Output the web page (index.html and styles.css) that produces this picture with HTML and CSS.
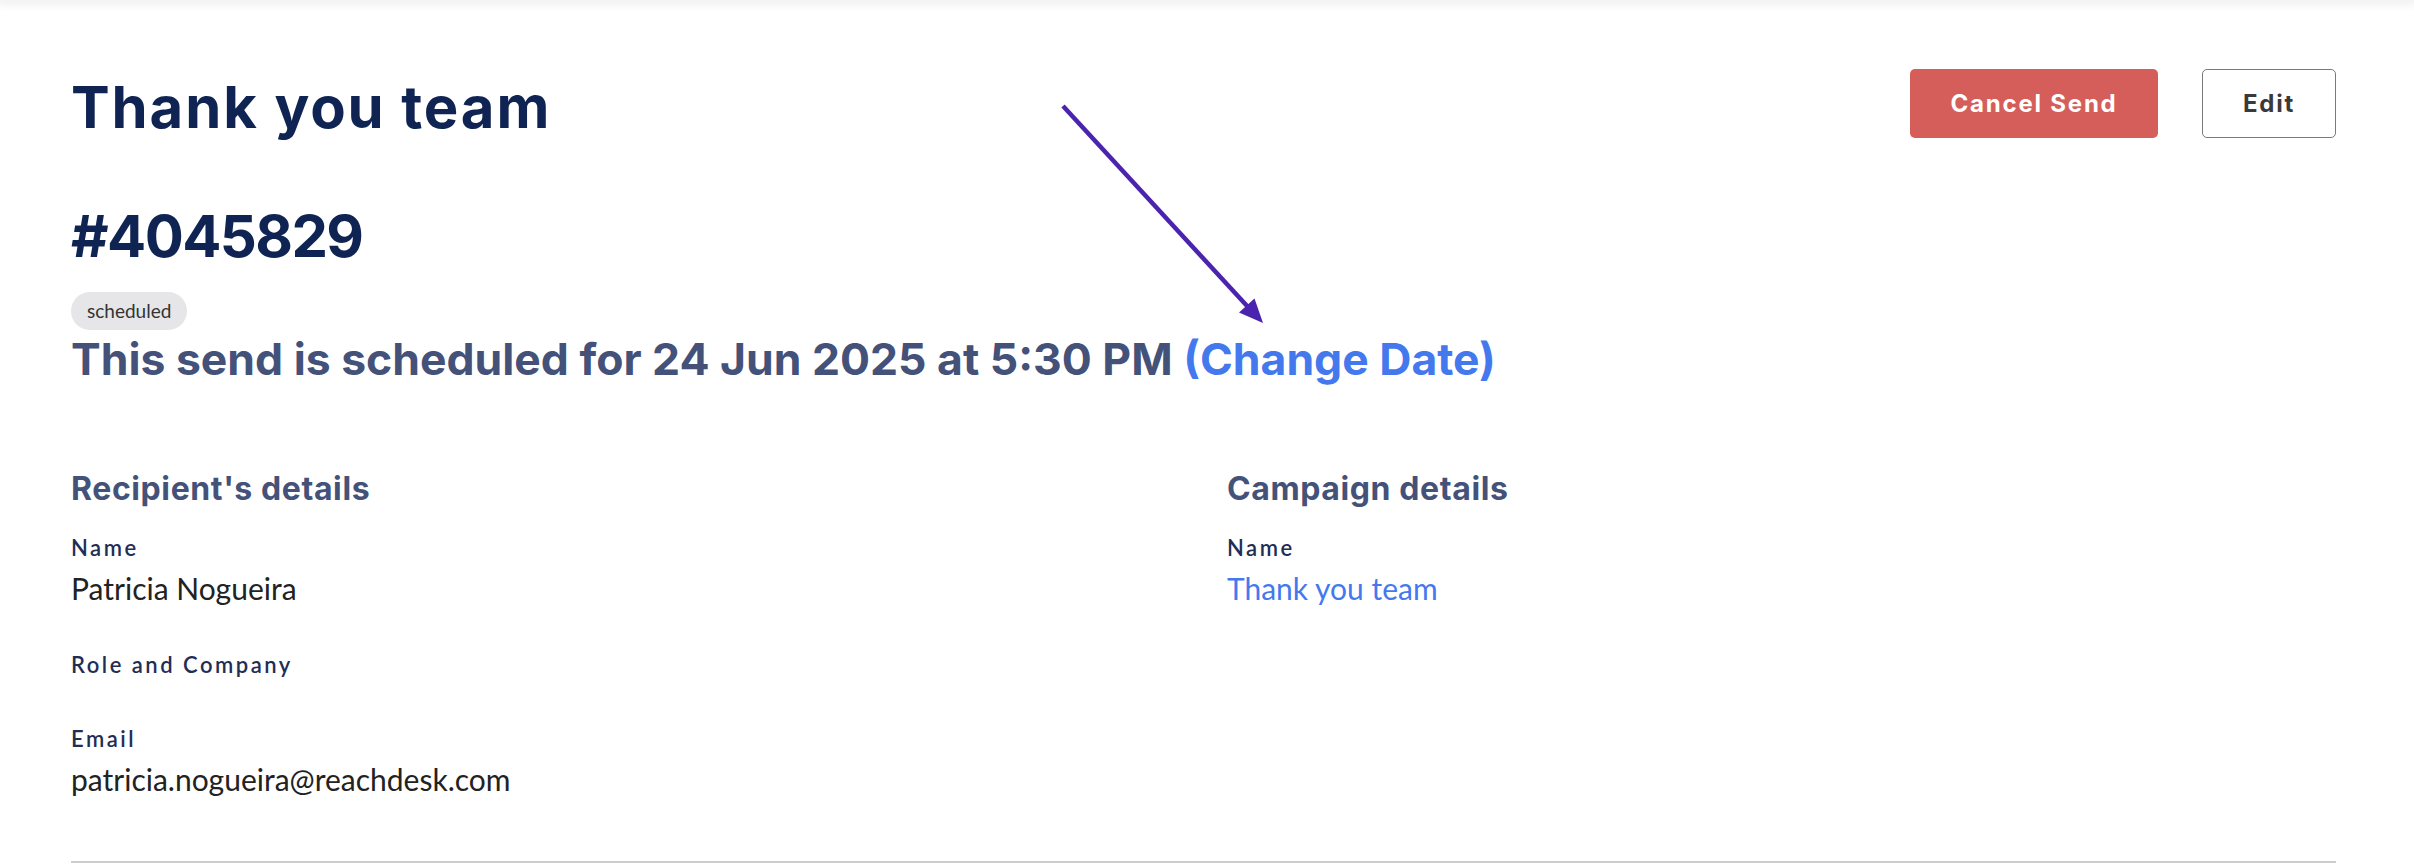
FILE: index.html
```html
<!DOCTYPE html>
<html lang="en">
<head>
<meta charset="utf-8">
<title>Thank you team</title>
<link rel="stylesheet" href="styles.css">
</head>
<body>
<div class="topbar"></div>
<main class="page">
  <header class="head">
    <h1 class="title">Thank you team</h1>
    <div class="actions">
      <button class="btn btn-danger">Cancel Send</button>
      <button class="btn btn-outline">Edit</button>
    </div>
  </header>
  <h2 class="send-id">#4045829</h2>
  <span class="badge">scheduled</span>
  <p class="schedule">This send is scheduled for 24 Jun 2025 at 5:30 PM <a class="change" href="#">(Change Date)</a></p>

  <section class="details">
    <div class="col">
      <h3 class="col-title">Recipient's details</h3>
      <div class="field">
        <div class="label">Name</div>
        <div class="value">Patricia Nogueira</div>
      </div>
      <div class="field">
        <div class="label">Role and Company</div>
        <div class="value empty"></div>
      </div>
      <div class="field">
        <div class="label">Email</div>
        <div class="value">patricia.nogueira@reachdesk.com</div>
      </div>
    </div>
    <div class="col">
      <h3 class="col-title">Campaign details</h3>
      <div class="field">
        <div class="label">Name</div>
        <a class="value link" href="#">Thank you team</a>
      </div>
    </div>
  </section>
  <hr class="divider">

  <svg class="annot" width="2414" height="866" viewBox="0 0 2414 866" aria-hidden="true">
    <line x1="1063" y1="106" x2="1248" y2="307" stroke="#4a23ae" stroke-width="4.5" stroke-linecap="butt"/>
    <polygon points="1239,312.5 1254.5,298.5 1263,323" fill="#4a23ae"/>
  </svg>
</main>
</body>
</html>
```

FILE: styles.css
```css
* { box-sizing: border-box; }
html, body { margin: 0; padding: 0; background: #ffffff; }
body {
  font-family: "Lato", "Liberation Sans", sans-serif;
  color: #222222;
  overflow: hidden;
}
.topbar {
  height: 0;
  box-shadow: 0 0 10px 3px rgba(0, 0, 0, 0.10);
}
.page {
  padding: 69px 78px 0 71px;
}
.head {
  display: flex;
  justify-content: space-between;
  align-items: flex-start;
}
.title {
  margin: 3px 0 0;
  font-family: "Inter", "Liberation Sans", sans-serif;
  font-weight: 700;
  font-size: 58px;
  line-height: 70px;
  letter-spacing: 1.9px;
  color: #0f2452;
}
.actions {
  display: flex;
  gap: 44px;
}
.btn {
  height: 69px;
  border-radius: 5px;
  font-family: "Inter", "Liberation Sans", sans-serif;
  font-weight: 700;
  font-size: 24px;
  letter-spacing: 1.8px;
  cursor: pointer;
}
.btn-danger {
  width: 248px;
  background: #d65e5a;
  color: #ffffff;
  border: none;
}
.btn-outline {
  width: 134px;
  background: #ffffff;
  color: #3a3a3a;
  border: 1.5px solid #7a7a7a;
}
.send-id {
  margin: 59px 0 0;
  font-family: "Inter", "Liberation Sans", sans-serif;
  font-weight: 700;
  font-size: 58px;
  line-height: 70px;
  letter-spacing: -1.6px;
  color: #0f2452;
}
.badge {
  display: inline-block;
  margin-top: 21px;
  height: 38px;
  padding: 0 16px;
  border-radius: 19px;
  background: #e6e6e8;
  color: #333333;
  font-size: 19px;
  line-height: 38px;
}
.schedule {
  margin: 2px 0 0;
  font-family: "Inter", "Liberation Sans", sans-serif;
  font-weight: 700;
  font-size: 44.5px;
  line-height: 54px;
  color: #44527a;
}
.change {
  color: #4479ee;
  text-decoration: none;
}
.details {
  display: grid;
  grid-template-columns: 1fr 1fr;
  column-gap: 47px;
  margin-top: 84px;
}
.col-title {
  margin: 0 0 25px;
  font-family: "Inter", "Liberation Sans", sans-serif;
  font-weight: 700;
  font-size: 32px;
  line-height: 38px;
  letter-spacing: 0.6px;
  color: #44527a;
}
.field {
  margin-bottom: 44px;
}
.label {
  font-size: 22px;
  line-height: 30px;
  letter-spacing: 2.5px;
  font-weight: 600;
  color: #1f2e55;
}
.value {
  display: block;
  margin-top: 8px;
  font-size: 30px;
  line-height: 35px;
  color: #222222;
}
.value.empty {
  height: 0;
  margin-top: 0;
}
.link {
  color: #4479ee;
  text-decoration: none;
}
.divider {
  margin: 20px 0 0;
  border: none;
  border-top: 2px solid #cdcdcd;
  height: 0;
}
.annot {
  position: absolute;
  top: 0;
  left: 0;
  pointer-events: none;
}
```
